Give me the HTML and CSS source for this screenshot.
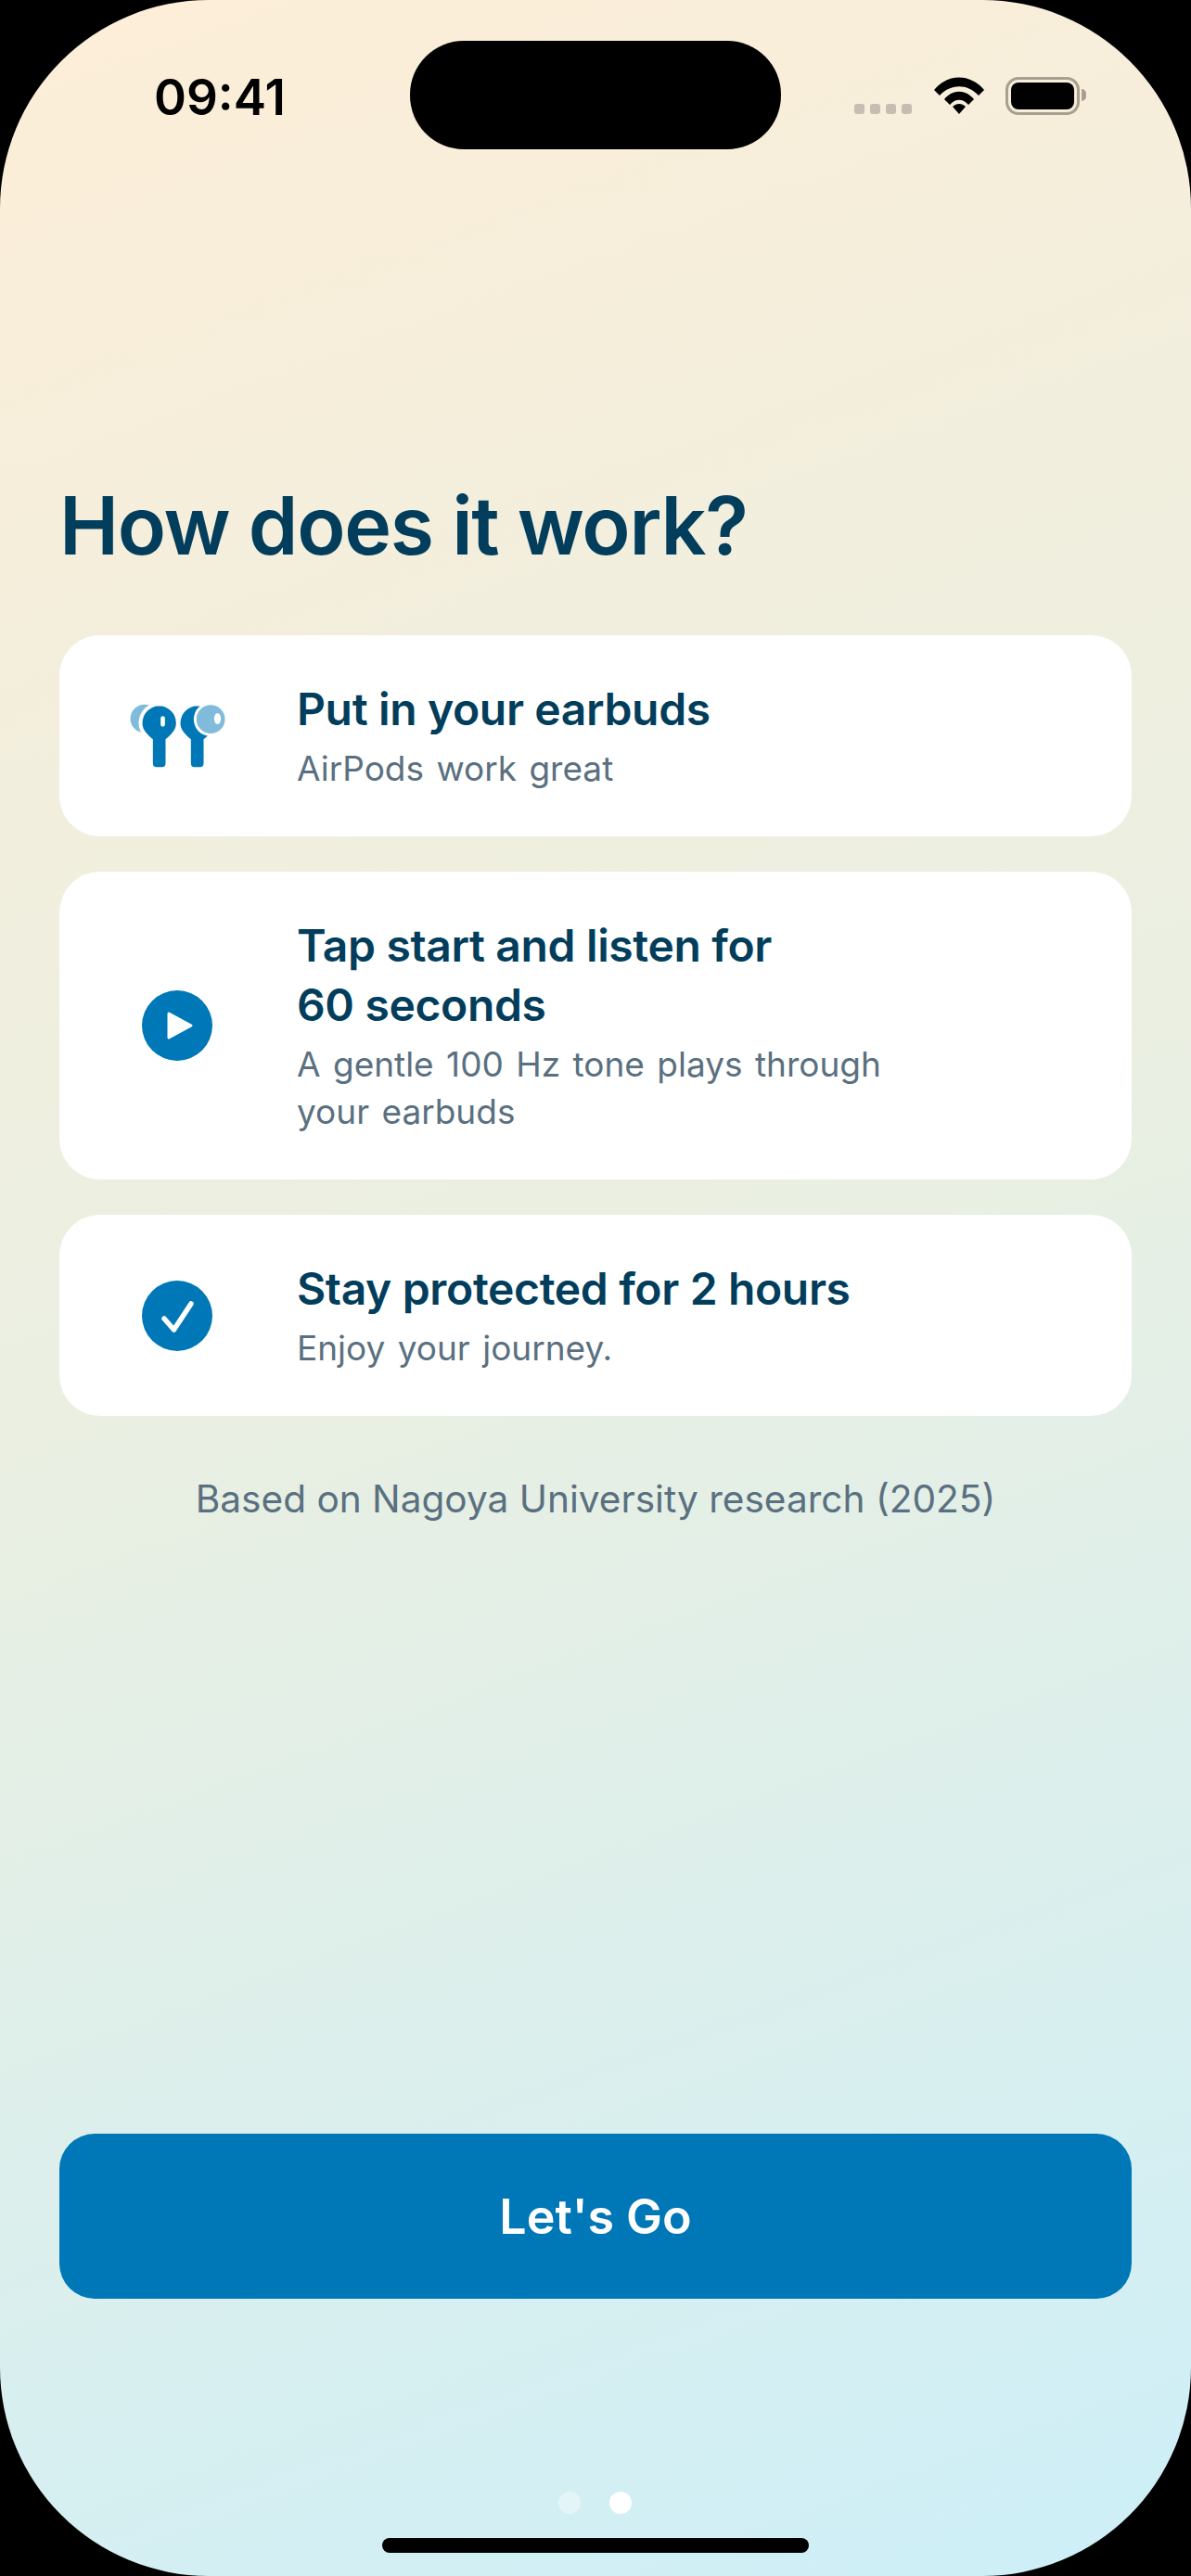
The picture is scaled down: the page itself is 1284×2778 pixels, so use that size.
FILE: index.html
```html
<!DOCTYPE html>
<html lang="en">
  <head>
    <meta charset="UTF-8" />
    <meta name="viewport" content="width=device-width, initial-scale=1.0" />
    <title>How does it work?</title>
    <link rel="stylesheet" href="styles.css">
  </head>
  <body>
    <div class="screen">
      <div class="status-bar">
        <span class="time">09:41</span>
        <div class="island"></div>
        <div class="status-icons">
          <div class="signal"><span></span><span></span><span></span><span></span></div>
          <svg class="wifi" viewBox="0 0 54 40">
            <path d="M0 14 C15 -4 39 -4 54 14 L48 20 C36 7 18 7 6 20 Z" fill="#000"/>
            <path d="M11 24 C20 13 34 13 43 24 L37 30 C31 23 23 23 17 30 Z" fill="#000"/>
            <path d="M20 32 C24 28 30 28 34 32 L27 40 Z" fill="#000"/>
          </svg>
          <div class="battery"><div class="battery-fill"></div></div>
        </div>
      </div>

      <div class="content">
        <h1 class="heading">How does it work?</h1>

        <div class="card">
          <div class="card-icon">
            <svg class="buds" viewBox="100 120 350 210">
              <circle cx="168" cy="168" r="46" fill="#80bbdc"/>
              <circle cx="215" cy="182" r="66" fill="#fff"/>
              <path d="M215 127 a55 55 0 0 1 55 55 c0 25 -20 40 -34 53 v78 a12 12 0 0 1 -12 12 h-17 a12 12 0 0 1 -12 -12 v-78 c-14 -13 -34 -28 -34 -53 a55 55 0 0 1 55 -55z" fill="#0077b6"/>
              <rect x="220" y="160" width="14" height="34" rx="7" fill="#fff"/>
              <path d="M338 127 a55 55 0 0 1 55 55 c0 25 -20 40 -34 53 v78 a12 12 0 0 1 -12 12 h-17 a12 12 0 0 1 -12 -12 v-78 c-14 -13 -34 -28 -34 -53 a55 55 0 0 1 55 -55z" fill="#0077b6"/>
              <circle cx="382" cy="170" r="55" fill="#fff"/>
              <circle cx="382" cy="170" r="46" fill="#80bbdc"/>
              <ellipse cx="404" cy="168" rx="11" ry="18" fill="#fff"/>
            </svg>
          </div>
          <div class="card-text">
            <div class="card-title">Put in your earbuds</div>
            <div class="card-sub">AirPods work great</div>
          </div>
        </div>

        <div class="card">
          <div class="card-icon">
            <svg class="round-icon" viewBox="0 0 76 76">
              <circle cx="38" cy="38" r="38" fill="#0077b6"/>
              <path d="M29 25 L53 38 L29 51 Z" fill="#fff" stroke="#fff" stroke-width="3" stroke-linejoin="round"/>
            </svg>
          </div>
          <div class="card-text">
            <div class="card-title">Tap start and listen for<br>60 seconds</div>
            <div class="card-sub">A gentle 100 Hz tone plays through<br>your earbuds</div>
          </div>
        </div>

        <div class="card">
          <div class="card-icon">
            <svg class="round-icon" viewBox="0 0 76 76">
              <circle cx="38" cy="38" r="38" fill="#0077b6"/>
              <path d="M24 41 L34.500 53 L53 25" fill="none" stroke="#fff" stroke-width="5.500" stroke-linecap="round" stroke-linejoin="round"/>
            </svg>
          </div>
          <div class="card-text">
            <div class="card-title">Stay protected for 2 hours</div>
            <div class="card-sub">Enjoy your journey.</div>
          </div>
        </div>

        <p class="note">Based on Nagoya University research (2025)</p>

        <button class="go-button">Let's Go</button>
      </div>

      <div class="pager">
        <span class="dot"></span>
        <span class="dot active"></span>
      </div>
      <div class="home-bar"></div>
    </div>
  </body>
</html>
```

FILE: styles.css
```css
html,
body {
  margin: 0;
  background-color: #000000;
}

body {
  font-family: Inter, "Noto Sans", sans-serif;
}

.screen {
  position: relative;
  width: 1284px;
  height: 2778px;
  border-radius: 225px;
  background: linear-gradient(160deg, #fdeed8 0%, #e9efe2 50%, #cdeff8 100%);
  display: flex;
  flex-direction: column;
  overflow: hidden;
}

/* status bar */
.status-bar {
  height: 161px;
  padding: 44px 113px 0 166px;
  box-sizing: border-box;
  display: flex;
  flex-shrink: 0;
}

.time {
  width: 140px;
  margin-right: 136px;
  padding-top: 31px;
  font-size: 53px;
  line-height: 60px;
  font-weight: 600;
  color: #000000;
}

.island {
  width: 400px;
  height: 117px;
  border-radius: 58px;
  background-color: #000000;
}

.status-icons {
  width: 250px;
  margin-left: auto;
  padding-top: 39px;
  display: flex;
  align-items: flex-start;
}

.signal {
  margin-top: 29px;
  margin-right: 24px;
  display: flex;
  gap: 6px;
}

.signal span {
  width: 11px;
  height: 11px;
  border-radius: 3px;
  background-color: #c6bfb1;
}

.wifi {
  width: 54px;
  height: 40px;
  margin-right: 23px;
}

.battery {
  width: 80px;
  height: 41px;
  padding: 3px;
  box-sizing: border-box;
  border: 3px solid #a89f90;
  border-radius: 14px;
  position: relative;
}

.battery::after {
  content: "";
  position: absolute;
  right: -10px;
  top: 10px;
  width: 5px;
  height: 13px;
  border-radius: 0 6px 6px 0;
  background-color: #a89f90;
}

.battery-fill {
  width: 100%;
  height: 100%;
  border-radius: 8px;
  background-color: #000000;
}

/* main content */
.content {
  flex: 1;
  padding: 0 64px;
  display: flex;
  flex-direction: column;
}

.heading {
  margin: 346px 0 58px;
  font-size: 86px;
  line-height: 120px;
  font-weight: 600;
  letter-spacing: -1.300px;
  color: #023e5c;
}

.card {
  margin-bottom: 38px;
  padding: 48px 64px;
  border-radius: 44px;
  background-color: #ffffff;
  display: flex;
  align-items: center;
}

.card-icon {
  width: 126px;
  margin-right: 66px;
  display: flex;
  justify-content: center;
  flex-shrink: 0;
}

.buds {
  width: 117px;
  height: 70px;
}

.round-icon {
  width: 76px;
  height: 76px;
}

.card-title {
  margin-bottom: 6px;
  font-size: 48px;
  line-height: 64px;
  font-weight: 600;
  letter-spacing: -0.350px;
  color: #023e5c;
}

.card-sub {
  font-size: 37px;
  line-height: 51px;
  word-spacing: 3px;
  color: #5a7080;
}

.note {
  margin: 27px 0 0;
  font-size: 40.600px;
  line-height: 50px;
  text-align: center;
  color: #5a7080;
}

.go-button {
  height: 178px;
  margin-top: auto;
  margin-bottom: 299px;
  border: none;
  border-radius: 38px;
  background-color: #0077b6;
  color: #ffffff;
  font-family: inherit;
  font-size: 52px;
  font-weight: 600;
  cursor: pointer;
}

/* bottom */
.pager {
  position: absolute;
  top: 2687px;
  left: 602px;
  display: flex;
  gap: 31px;
}

.dot {
  width: 24px;
  height: 24px;
  border-radius: 50%;
  background-color: rgba(255, 255, 255, 0.4);
}

.dot.active {
  background-color: #ffffff;
}

.home-bar {
  position: absolute;
  top: 2737px;
  left: 412px;
  width: 460px;
  height: 16px;
  border-radius: 8px;
  background-color: #000000;
}
```
